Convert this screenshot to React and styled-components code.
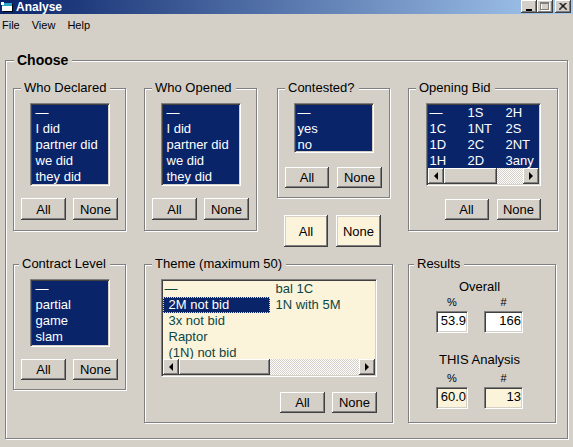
import React from 'react';
import styled, { createGlobalStyle, css } from 'styled-components';

const FACE = '#d4d0c8';
const NAVY = '#0a246a';
const CREAM = '#fcf4da';

const raised = css`
  box-shadow: inset -1px -1px 0 #404040, inset 1px 1px 0 #fff,
    inset -2px -2px 0 #808080, inset 2px 2px 0 ${FACE};
`;

const sunken = css`
  border-style: solid;
  border-width: 1px;
  border-color: #808080 #fff #fff #808080;
  box-shadow: inset 1px 1px 0 #404040, inset -1px -1px 0 ${FACE};
`;

const GlobalStyle = createGlobalStyle`
  html, body { margin: 0; padding: 0; background: ${FACE}; }
  body { font-family: "Liberation Sans", Arial, sans-serif; font-size: 13px; color: #000; }
  * { box-sizing: border-box; }
`;

const Window = styled.div`
  width: 573px;
  height: 447px;
  overflow: hidden;
  background: ${FACE};
  display: flex;
  flex-direction: column;
`;

const TitleBar = styled.div`
  height: 14px;
  flex: none;
  display: flex;
  align-items: center;
  padding-left: 1px;
  background: linear-gradient(to right, #0a246a 0%, #a6caf0 100%);
`;

const TitleText = styled.span`
  color: #fff;
  font-weight: 700;
  font-size: 12px;
  line-height: 14px;
  margin-left: 2px;
`;

const CaptionGroup = styled.div`
  margin-left: auto;
  align-self: flex-start;
  display: flex;
  padding-right: 2px;
`;

const CaptionButton = styled.div`
  width: 16px;
  height: 13px;
  background: ${FACE};
  ${raised};
  display: flex;
  align-items: center;
  justify-content: center;
  margin-left: ${p => p.$ml || 0}px;
`;

const MenuBar = styled.div`
  height: 20px;
  flex: none;
  display: flex;
  align-items: center;
  gap: 12px;
  padding: 1px 0 0 2px;
  font-size: 11px;
`;

const MenuItem = styled.span`
  line-height: 14px;
`;

const GroupBox = styled.div`
  position: relative;
  flex: none;
  width: ${p => p.$w}px;
  height: ${p => p.$h}px;
  border: 1px solid #808080;
  box-shadow: inset 1px 1px 0 #fff, 1px 1px 0 #fff;
  display: flex;
  flex-direction: column;
  align-items: ${p => p.$align || 'center'};
  padding: ${p => p.$pad || '14px 0 0 0'};
  margin: ${p => p.$margin || '0'};
`;

const Legend = styled.span`
  position: absolute;
  top: -9px;
  left: ${p => (p.$left ?? 7)}px;
  padding: 0 4px 0 3px;
  background: ${FACE};
  font-size: ${p => (p.$bold ? 14 : 13)}px;
  font-weight: ${p => (p.$bold ? 700 : 400)};
  line-height: 16px;
  white-space: nowrap;
`;

const Row = styled.div`
  display: flex;
  align-items: flex-start;
  margin-top: ${p => p.$mt || 0}px;
`;

const Spacer = styled.div`
  flex: none;
  width: ${p => p.$w}px;
`;

const Column = styled.div`
  flex: none;
  width: ${p => p.$w}px;
  display: flex;
  flex-direction: column;
`;

const ListBox = styled.div`
  flex: none;
  width: ${p => p.$w}px;
  height: ${p => p.$h}px;
  background: ${p => p.$bg || NAVY};
  color: ${p => p.$fg || '#fff'};
  ${sunken};
  padding: 1px;
  display: flex;
  flex-direction: column;
  overflow: hidden;
`;

const Items = styled.div`
  flex: 1;
  min-height: 0;
  display: grid;
  grid-auto-flow: column;
  grid-template-rows: repeat(${p => p.$rows}, 16px);
  grid-auto-columns: ${p => (p.$col ? `${p.$col}px` : '100%')};
  align-content: start;
  overflow: hidden;
`;

const Item = styled.div`
  height: 16px;
  line-height: 16px;
  font-size: 13px;
  padding-left: ${p => (p.$pl ?? 4)}px;
  white-space: nowrap;
  ${p =>
    p.$sel &&
    css`
      background: ${NAVY};
      color: #fff;
      outline: 1px dotted #e8d890;
      outline-offset: -1px;
    `}
`;

const ScrollBar = styled.div`
  flex: none;
  height: 16px;
  display: flex;
`;

const ScrollArrow = styled.div`
  flex: none;
  width: 16px;
  height: 16px;
  background: ${FACE};
  ${raised};
  display: flex;
  align-items: center;
  justify-content: center;
`;

const Thumb = styled.div`
  flex: none;
  width: ${p => p.$w}px;
  height: 16px;
  background: ${FACE};
  ${raised};
`;

const Track = styled.div`
  flex: 1;
  background-color: #fff;
  background-image: repeating-conic-gradient(${FACE} 0 25%, #fff 0 50%);
  background-size: 2px 2px;
`;

const ButtonRow = styled.div`
  display: flex;
  justify-content: ${p => p.$justify || 'center'};
  gap: ${p => p.$gap ?? 7}px;
  margin-top: ${p => p.$mt || 0}px;
  padding-left: ${p => p.$pl || 0}px;
  width: ${p => (p.$w ? `${p.$w}px` : 'auto')};
  flex: none;
`;

const Button = styled.button`
  flex: none;
  width: ${p => p.$w || 45}px;
  height: ${p => p.$h || 21}px;
  background: ${p => (p.$cream ? CREAM : FACE)};
  border: none;
  margin: 0;
  padding: 0;
  font-family: "Liberation Sans", Arial, sans-serif;
  font-size: 13px;
  color: #000;
  ${raised};
`;

const ResultsGrid = styled.div`
  display: grid;
  grid-template-columns: 32px 39px;
  column-gap: 16px;
  width: 87px;
`;

const Heading = styled.div`
  grid-column: 1 / -1;
  text-align: center;
  line-height: 16px;
  font-size: 13px;
  white-space: nowrap;
  margin-top: ${p => p.$mt || 0}px;
`;

const Label = styled.div`
  text-align: center;
  line-height: 14px;
  font-size: 11px;
  margin-top: ${p => p.$mt || 0}px;
`;

const ValueBox = styled.div`
  height: 22px;
  margin-top: 2px;
  ${sunken};
  background: ${p => (p.$cream ? CREAM : '#fff')};
  text-align: right;
  padding-right: 1px;
  line-height: 18px;
  font-size: 13px;
`;

const LeftArrow = () => (
  <svg width="8" height="8" viewBox="0 0 8 8">
    <polygon points="6,0 2,4 6,8" fill="#000" />
  </svg>
);
const RightArrow = () => (
  <svg width="8" height="8" viewBox="0 0 8 8">
    <polygon points="2,0 6,4 2,8" fill="#000" />
  </svg>
);

const HScroll = ({ thumb }) => (
  <ScrollBar>
    <ScrollArrow><LeftArrow /></ScrollArrow>
    <Thumb $w={thumb} />
    <Track />
    <ScrollArrow><RightArrow /></ScrollArrow>
  </ScrollBar>
);

const AppIcon = () => (
  <svg width="13" height="12" viewBox="0 0 13 12">
    <rect x="2" y="3" width="10" height="8" fill="#000" />
    <rect x="1" y="2" width="10" height="8" fill="#fff" />
    <rect x="1" y="2" width="10" height="3" fill="#2aa8c8" />
    <rect x="0" y="1" width="3" height="3" fill="#fff" />
  </svg>
);

const AllNone = ({ mt = 12, w1 = 45, w2 = 45, gap = 7, h = 21, justify, width }) => (
  <ButtonRow $mt={mt} $gap={gap} $justify={justify} $w={width}>
    <Button $w={w1} $h={h}>All</Button>
    <Button $w={w2} $h={h}>None</Button>
  </ButtonRow>
);

const SimpleList = ({ items, w, h, pl = 4 }) => (
  <ListBox $w={w} $h={h}>
    <Items $rows={items.length}>
      {items.map(t => (
        <Item key={t} $pl={pl}>{t}</Item>
      ))}
    </Items>
  </ListBox>
);

const bids = ['—', '1C', '1D', '1H', '1S', '1NT', '2C', '2D', '2H', '2S', '2NT', '3any'];
const themes = [
  { t: '—', pl: 2 },
  { t: '2M not bid', sel: true },
  { t: '3x not bid' },
  { t: 'Raptor' },
  { t: '(1N) not bid' },
  { t: 'bal 1C' },
  { t: '1N with 5M' },
];

export default function App() {
  return (
    <>
      <GlobalStyle />
      <Window>
        <TitleBar>
          <AppIcon />
          <TitleText>Analyse</TitleText>
          <CaptionGroup>
            <CaptionButton>
              <svg width="8" height="8" viewBox="0 0 8 8">
                <rect x="1" y="6" width="6" height="2" fill="#000" />
              </svg>
            </CaptionButton>
            <CaptionButton>
              <svg width="10" height="9" viewBox="0 0 10 9">
                <rect x="1.5" y="1.5" width="8" height="7" fill="none" stroke="#fff" />
                <rect x="0.5" y="0.5" width="8" height="7" fill="none" stroke="#808080" />
                <rect x="1" y="1" width="7" height="1" fill="#808080" />
              </svg>
            </CaptionButton>
            <CaptionButton $ml={2}>
              <svg width="8" height="7" viewBox="0 0 8 7">
                <path d="M0.5 0 L7.5 7 M1.5 0 L8 6.5 M7.5 0 L0.5 7 M6.5 0 L0 6.5" stroke="#000" strokeWidth="1" />
              </svg>
            </CaptionButton>
          </CaptionGroup>
        </TitleBar>

        <MenuBar>
          <MenuItem>File</MenuItem>
          <MenuItem>View</MenuItem>
          <MenuItem>Help</MenuItem>
        </MenuBar>

        <GroupBox
          $w={563}
          $h={379}
          $align="flex-start"
          $pad="27px 0 0 7px"
          $margin="26px 0 0 5px"
        >
          <Legend $bold $left={8}>Choose</Legend>

          <Row>
            <GroupBox $w={113} $h={143}>
              <Legend>Who Declared</Legend>
              <SimpleList w={80} h={83} items={['—', 'I did', 'partner did', 'we did', 'they did']} />
              <AllNone mt={12} h={22} />
            </GroupBox>
            <Spacer $w={18} />
            <GroupBox $w={113} $h={143}>
              <Legend>Who Opened</Legend>
              <SimpleList w={80} h={83} items={['—', 'I did', 'partner did', 'we did', 'they did']} />
              <AllNone mt={12} h={22} />
            </GroupBox>
            <Spacer $w={20} />
            <Column $w={113}>
              <GroupBox $w={113} $h={110}>
                <Legend>Contested?</Legend>
                <SimpleList w={80} h={50} pl={2} items={['—', 'yes', 'no']} />
                <AllNone mt={14} w1={44} w2={45} gap={8} />
              </GroupBox>
              <ButtonRow $mt={17} $pl={7} $gap={8} $justify="flex-start">
                <Button $w={44} $h={32} $cream>All</Button>
                <Button $w={45} $h={32} $cream>None</Button>
              </ButtonRow>
            </Column>
            <Spacer $w={18} />
            <GroupBox $w={150} $h={143}>
              <Legend>Opening Bid</Legend>
              <ListBox $w={115} $h={83}>
                <Items $rows={4} $col={38}>
                  {bids.map(b => (
                    <Item key={b} $pl={2}>{b}</Item>
                  ))}
                </Items>
                <HScroll thumb={53} />
              </ListBox>
              <AllNone mt={13} w1={44} w2={44} gap={8} width={115} justify="flex-end" />
            </GroupBox>
          </Row>

          <Row $mt={17}>
            <GroupBox $w={113} $h={126}>
              <Legend $left={5}>Contract Level</Legend>
              <SimpleList w={80} h={68} items={['—', 'partial', 'game', 'slam']} />
              <AllNone mt={12} />
            </GroupBox>
            <Spacer $w={18} />
            <GroupBox $w={249} $h={159}>
              <Legend>Theme (maximum 50)</Legend>
              <ListBox $w={216} $h={98} $bg={CREAM} $fg="#0c4646">
                <Items $rows={5} $col={107}>
                  {themes.map(({ t, sel, pl }) => (
                    <Item key={t} $sel={sel} $pl={pl ?? 6}>{t}</Item>
                  ))}
                </Items>
                <HScroll thumb={91} />
              </ListBox>
              <AllNone mt={15} width={217} justify="flex-end" />
            </GroupBox>
            <Spacer $w={15} />
            <GroupBox $w={148} $h={159} $align="flex-start" $pad="14px 0 0 27px">
              <Legend $left={5}>Results</Legend>
              <ResultsGrid>
                <Heading>Overall</Heading>
                <Label>%</Label>
                <Label>#</Label>
                <ValueBox>53.9</ValueBox>
                <ValueBox>166</ValueBox>
                <Heading $mt={19}>THIS Analysis</Heading>
                <Label $mt={3}>%</Label>
                <Label $mt={3}>#</Label>
                <ValueBox $cream>60.0</ValueBox>
                <ValueBox $cream>13</ValueBox>
              </ResultsGrid>
            </GroupBox>
          </Row>
        </GroupBox>
      </Window>
    </>
  );
}
